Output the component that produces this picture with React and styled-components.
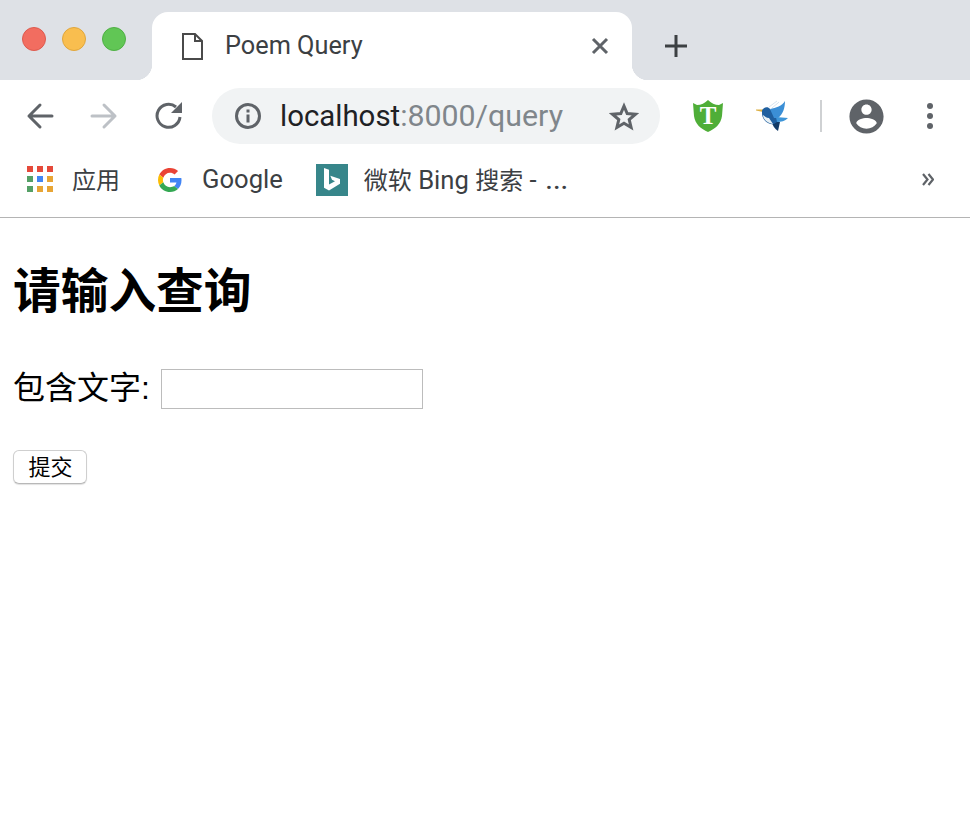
import React from 'react'
import styled, { createGlobalStyle } from 'styled-components'

const Global = createGlobalStyle`
html, body {
  margin: 0;
  padding: 0;
  background: #fff;
}
`

const Page = styled.div`
display: flex;
flex-direction: column;
width: 970px;
height: 820px;
overflow: hidden;
font-family: Roboto, "Noto Sans CJK SC", sans-serif;
`

const TabStrip = styled.div`
display: flex;
align-items: flex-end;
height: 80px;
padding-left: 22px;
background: #dee1e6;
`

const Lights = styled.div`
display: flex;
gap: 16px;
align-self: flex-start;
margin-top: 27px;
margin-right: 26px;
`

const Light = styled.span`
width: 24px;
height: 24px;
box-sizing: border-box;
border-radius: 50%;
background: ${(props) => props.$fill};
border: 1px solid ${(props) => props.$edge};
`

const Tab = styled.div`
position: relative;
display: flex;
align-items: center;
width: 480px;
height: 68px;
box-sizing: border-box;
padding: 0 23px 0 30px;
background: #fff;
border-radius: 16px 16px 0 0;
&::before, &::after {
  content: '';
  position: absolute;
  bottom: 0;
  width: 16px;
  height: 16px;
}
&::before {
  left: -16px;
  background: radial-gradient(circle at 0 0, #dee1e6 16px, #fff 16.5px);
}
&::after {
  right: -16px;
  background: radial-gradient(circle at 100% 0, #dee1e6 16px, #fff 16.5px);
}
`

const TabTitle = styled.span`
flex: 1;
margin-left: 22px;
margin-bottom: 2px;
font-size: 25.3px;
color: #3c4043;
`

const NewTab = styled.div`
display: flex;
margin-left: 32px;
margin-bottom: 22px;
`

const Toolbar = styled.div`
display: flex;
align-items: center;
height: 72px;
padding-left: 8px;
background: #fff;
`

const Slot = styled.div`
display: flex;
align-items: center;
justify-content: center;
width: 64px;
height: 56px;
flex: none;
`

const Omnibox = styled.div`
display: flex;
align-items: center;
width: 448px;
height: 56px;
box-sizing: border-box;
margin: 0 16px 0 12px;
padding: 0 21px 0 22px;
border-radius: 28px;
background: #f1f3f4;
`

const Url = styled.div`
flex: 1;
margin-left: 18px;
margin-bottom: 2px;
font-size: 29.4px;
color: #202124;
white-space: nowrap;
`

const UrlRest = styled.span`
font-size: 30.3px;
color: #80868b;
`

const Divider = styled.div`
width: 2px;
height: 32px;
margin: 0 12px 0 16px;
background: #cfd1d3;
`

const Bookmarks = styled.div`
display: flex;
align-items: center;
height: 55px;
padding: 0 0 10px 27px;
background: #fff;
border-bottom: 1px solid #b4b4b4;
`

const Bookmark = styled.div`
display: flex;
align-items: center;
gap: ${(props) => props.$gap}px;
margin-right: ${(props) => props.$after}px;
font-size: 24px;
color: #3c4043;
white-space: nowrap;
`

const BookmarkLabel = styled.span`
margin-bottom: 2px;
`

const Latin = styled.span`
font-size: 25.6px;
`

const Dots = styled.span`
margin-left: 9px;
font-size: 25.6px;
font-weight: 500;
letter-spacing: 0.5px;
`

const More = styled.div`
display: flex;
margin-left: auto;
margin-right: 36px;
`

const AppsGrid = styled.div`
display: grid;
grid-template-columns: repeat(3, 6px);
grid-auto-rows: 6px;
gap: 4px;
margin-bottom: 1px;
`

const AppsDot = styled.span`
background: ${(props) => props.$color};
`

const BingTile = styled.div`
display: flex;
align-items: center;
justify-content: center;
width: 32px;
height: 32px;
background: #37868a;
`

const Content = styled.main`
padding: 0 13px;
color: #000;
font-family: "Liberation Sans", "Noto Sans CJK SC", sans-serif;
`

const Heading = styled.h1`
margin: 40px 0 0;
font-size: 47.7px;
line-height: 68px;
font-weight: 700;
`

const Row = styled.label`
display: flex;
align-items: center;
gap: 11px;
height: 40px;
margin-top: 43px;
font-size: 32px;
line-height: 40px;
`

const RowText = styled.span`
margin-bottom: 3px;
`

const QueryInput = styled.input`
width: 262px;
height: 40px;
box-sizing: border-box;
padding: 0 6px;
border: 1px solid #bcbcbc;
background: #fff;
outline: none;
`

const Submit = styled.button`
display: block;
width: 74px;
height: 34px;
margin-top: 41px;
padding: 2px 0 0 1px;
box-sizing: border-box;
border: 1px solid #cfcfcf;
border-bottom-color: #b8b8b8;
border-radius: 6px;
background: #fff;
box-shadow: 0 1px 1px rgba(0, 0, 0, 0.12);
color: #000;
font-family: "Liberation Sans", "Noto Sans CJK SC", sans-serif;
font-size: 22px;
line-height: 30px;
`

const appsColors = ['#e5493a', '#e5493a', '#e5493a', '#55a066', '#4285f4', '#e8a535', '#55a066', '#e8a535', '#e8a535']

const GoogleLogo = () => (
  <svg width="24" height="24" viewBox="0 0 48 48">
    <path fill="#ea4335" d="M24 9.5c3.5 0 6.7 1.3 9.2 3.6l6.9-6.9C35.900 2.400 30.400 0 24 0 14.600 0 6.500 5.400 2.600 13.200l8 6.200C12.500 13.600 17.800 9.500 24 9.500z" />
    <path fill="#4285f4" d="M47 24.500c0-1.600-.1-3.100-.4-4.500H24v9h12.900c-.6 3-2.200 5.500-4.700 7.200l7.700 6C44.400 38 47 31.800 47 24.500z" />
    <path fill="#fbbc05" d="M10.600 28.600c-.5-1.400-.8-3-.8-4.600s.3-3.200.8-4.600l-8-6.200C.9 16.500 0 20.100 0 24s.9 7.500 2.600 10.800l8-6.200z" />
    <path fill="#34a853" d="M24 48c6.500 0 11.900-2.100 15.900-5.800l-7.700-6c-2.200 1.400-4.900 2.300-8.200 2.300-6.200 0-11.500-4.100-13.400-9.900l-8 6.200C6.500 42.600 14.600 48 24 48z" />
  </svg>
)

const Shield = () => (
  <svg width="30" height="32" viewBox="0 0 30 32">
    <path fill="#4fae38" d="M0 3 L4 5 C8 5 12 3 15 0 C18 3 22 5 26 5 L30 3 L29 16 C28 24 22 29 15 32 C8 29 2 24 1 16 Z" />
    <text x="15" y="24" textAnchor="middle" fontFamily="Liberation Serif" fontWeight="700" fontSize="25" fill="#fff">T</text>
  </svg>
)

const Bird = () => (
  <svg width="32" height="32" viewBox="0 0 32 32">
    <path fill="#dcb045" d="M0 9.500 L7 9.500 L7 12 L0 10.500 Z" />
    <path fill="none" stroke="#d5e3ef" strokeWidth="1" d="M13 7 C16 5 18 3 21 1 M16 8 C18 6 20 5 23 2" />
    <path fill="#123a66" d="M15 20 L24 22 L22 31 C19 29 16 25 15 20Z" />
    <path fill="#1f5f9f" d="M6 11 C7 7 12 6 14 9 L19 14 L24 20 L18 24 C12 25 6 20 6 13Z" />
    <path fill="#e8f0f4" d="M7 15 C7 19 11 23 17 24 L13 18 C10 18 9 16 7 15Z" />
    <path fill="#3b8fd6" d="M14 9 C20 8 26 6 29 1 C29 8 27 14 22 18 L18 18Z" />
    <path fill="#3d95d8" d="M20 17 L32 18 C29 21 25 22 21 22Z" />
  </svg>
)

const App = () => (
  <Page>
    <Global />
    <TabStrip>
      <Lights>
        <Light $fill="#f26d60" $edge="#dd5a4e" />
        <Light $fill="#f9be4f" $edge="#e0a63c" />
        <Light $fill="#61c655" $edge="#4fb044" />
      </Lights>
      <Tab>
        <svg width="21" height="27" viewBox="0 0 21 27">
          <path fill="none" stroke="#4a4a4a" strokeWidth="2" d="M1 1 H13 L20 8 V26 H1 Z M13 1 V8 H20" />
        </svg>
        <TabTitle>Poem Query</TabTitle>
        <svg width="18" height="18" viewBox="0 0 18 18">
          <path stroke="#5f6368" strokeWidth="3" d="M2 2 L16 16 M16 2 L2 16" />
        </svg>
      </Tab>
      <NewTab>
        <svg width="24" height="24" viewBox="0 0 24 24">
          <path stroke="#3c4043" strokeWidth="3" d="M12 1 V23 M1 12 H23" />
        </svg>
      </NewTab>
    </TabStrip>
    <Toolbar>
      <Slot>
        <svg width="28" height="28" viewBox="0 0 28 28">
          <path fill="none" stroke="#5f6368" strokeWidth="3" strokeLinecap="round" strokeLinejoin="round" d="M26 14 H3 M14 3 L3 14 L14 25" />
        </svg>
      </Slot>
      <Slot>
        <svg width="28" height="28" viewBox="0 0 28 28">
          <path fill="none" stroke="#bdc1c6" strokeWidth="3" strokeLinecap="round" strokeLinejoin="round" d="M2 14 H25 M14 3 L25 14 L14 25" />
        </svg>
      </Slot>
      <Slot>
        <svg width="28" height="28" viewBox="-1 0 28 28">
          <path fill="none" stroke="#5f6368" strokeWidth="3" d="M25 15 A11.500 11.500 0 1 1 21 5" />
          <path fill="#5f6368" d="M27 0 V11 H16 Z" />
        </svg>
      </Slot>
      <Omnibox>
        <svg width="28" height="28" viewBox="0 0 28 28">
          <circle cx="14" cy="14" r="11.500" fill="none" stroke="#5f6368" strokeWidth="3" />
          <path fill="#5f6368" d="M12.500 7.500 H15.500 V10.500 H12.500 Z M12.500 12.500 H15.500 V20.500 H12.500 Z" />
        </svg>
        <Url>localhost<UrlRest>:8000/query</UrlRest></Url>
        <svg width="30" height="29" viewBox="0 0 30 29">
          <path fill="none" stroke="#5f6368" strokeWidth="3" strokeLinejoin="miter" d="M15 4 L18.200 11.500 L26.500 12.200 L20.200 17.600 L22.100 25.500 L15 21.300 L7.900 25.500 L9.800 17.600 L3.500 12.200 L11.800 11.500 Z" />
        </svg>
      </Omnibox>
      <Slot><Shield /></Slot>
      <Slot><Bird /></Slot>
      <Divider />
      <Slot>
        <svg width="41" height="41" viewBox="0 0 24 24">
          <path fill="#5f6368" d="M12 2C6.480 2 2 6.480 2 12s4.480 10 10 10 10-4.480 10-10S17.520 2 12 2zm0 3c1.660 0 3 1.340 3 3s-1.340 3-3 3-3-1.340-3-3 1.340-3 3-3zm0 14.200c-2.500 0-4.710-1.280-6-3.220.03-1.990 4-3.080 6-3.080 1.990 0 5.970 1.090 6 3.080-1.290 1.940-3.500 3.220-6 3.220z" />
        </svg>
      </Slot>
      <Slot>
        <svg width="8" height="28" viewBox="0 0 8 28">
          <circle cx="4" cy="4" r="3" fill="#5f6368" />
          <circle cx="4" cy="14" r="3" fill="#5f6368" />
          <circle cx="4" cy="24" r="3" fill="#5f6368" />
        </svg>
      </Slot>
    </Toolbar>
    <Bookmarks>
      <Bookmark $gap={19} $after={38}>
        <AppsGrid>
          {appsColors.map((c, i) => <AppsDot key={i} $color={c} />)}
        </AppsGrid>
        <BookmarkLabel>应用</BookmarkLabel>
      </Bookmark>
      <Bookmark $gap={20} $after={33}>
        <GoogleLogo />
        <BookmarkLabel><Latin>Google</Latin></BookmarkLabel>
      </Bookmark>
      <Bookmark $gap={16} $after={0}>
        <BingTile>
          <svg width="20" height="26" viewBox="0 0 20 26">
            <path fill="#fff" d="M2 1 L7 2.700 V17.500 L13 14.200 L10 12.800 L8.300 8.800 L18 12 V16.800 L7 23.500 L2 20.700 Z" />
          </svg>
        </BingTile>
        <BookmarkLabel>微软<Latin> Bing </Latin>搜索<Latin> -</Latin><Dots>...</Dots></BookmarkLabel>
      </Bookmark>
      <More>
        <svg width="12" height="13" viewBox="0 0 12 13">
          <path fill="none" stroke="#5f6368" strokeWidth="2.200" d="M1 1 L5.500 6.500 L1 12 M6.500 1 L11 6.500 L6.500 12" />
        </svg>
      </More>
    </Bookmarks>
    <Content>
      <Heading>请输入查询</Heading>
      <Row>
        <RowText>包含文字:</RowText>
        <QueryInput type="text" />
      </Row>
      <Submit type="button">提交</Submit>
    </Content>
  </Page>
)

export default App
